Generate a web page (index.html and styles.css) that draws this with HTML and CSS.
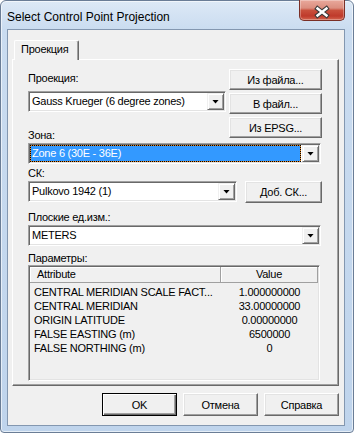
FILE: index.html
```html
<!DOCTYPE html>
<html lang="ru">
<head>
  <meta charset="UTF-8"/>
  <title>Select Control Point Projection</title>
  <link rel="stylesheet" href="styles.css">
</head>
<body>
  <div class="window">
    <div class="titlebar">
      <span class="title">Select Control Point Projection</span>
      <div class="close">
        <svg width="44" height="20" viewBox="0 0 44 20">
          <path d="M17.5 8.5 L26.5 15.5 M26.5 8.5 L17.5 15.5" stroke="#3a3a3a" stroke-width="4.6" stroke-linecap="square"/>
          <path d="M17.5 8.5 L26.5 15.5 M26.5 8.5 L17.5 15.5" stroke="#fff" stroke-width="2.4" stroke-linecap="square"/>
        </svg>
      </div>
    </div>

    <div class="client">
      <div class="tabs">
        <div class="tab">Проекция</div>
      </div>
      <div class="panel">
        <div class="top">
          <div class="left-col">
            <div class="label">Проекция:</div>
            <div class="combo combo-proj">
              <span class="value">Gauss Krueger (6 degree zones)</span>
              <span class="drop"></span>
            </div>
            <div class="label label-zone">Зона:</div>
          </div>
          <div class="right-col">
            <button class="btn">Из файла...</button>
            <button class="btn">В файл...</button>
            <button class="btn">Из EPSG...</button>
          </div>
        </div>

        <div class="combo combo-wide combo-zone">
          <span class="value">Zone 6 (30E - 36E)</span>
          <span class="drop"></span>
        </div>

        <div class="label label-cs">СК:</div>
        <div class="cs-row">
          <div class="combo combo-cs">
            <span class="value">Pulkovo 1942 (1)</span>
            <span class="drop"></span>
          </div>
          <button class="btn btn-add">Доб. СК...</button>
        </div>

        <div class="label label-units">Плоские ед.изм.:</div>
        <div class="combo combo-wide combo-units">
          <span class="value">METERS</span>
          <span class="drop"></span>
        </div>

        <div class="label label-params">Параметры:</div>
        <div class="list">
          <div class="list-head">
            <div class="head-attr">Attribute</div>
            <div class="head-val">Value</div>
          </div>
          <div class="list-body">
            <div class="list-row"><span class="row-attr">CENTRAL MERIDIAN SCALE FACT...</span><span class="row-val">1.000000000</span></div>
            <div class="list-row"><span class="row-attr">CENTRAL MERIDIAN</span><span class="row-val">33.00000000</span></div>
            <div class="list-row"><span class="row-attr">ORIGIN LATITUDE</span><span class="row-val">0.00000000</span></div>
            <div class="list-row"><span class="row-attr">FALSE EASTING (m)</span><span class="row-val">6500000</span></div>
            <div class="list-row"><span class="row-attr">FALSE NORTHING (m)</span><span class="row-val">0</span></div>
          </div>
        </div>
      </div>

      <div class="actions">
        <button class="btn btn-default">OK</button>
        <button class="btn">Отмена</button>
        <button class="btn">Справка</button>
      </div>
    </div>
  </div>
</body>
</html>
```

FILE: styles.css
```css
body {
  margin: 0;
  font-family: "Liberation Sans", Arial, sans-serif;
  font-size: 11px;
  letter-spacing: -0.25px;
  color: #000;
}

/* window frame */
.window {
  width: 354px;
  height: 433px;
  box-sizing: border-box;
  border: 1px solid #6a7d96;
  border-radius: 6px 6px 4px 4px;
  background: linear-gradient(180deg, #dde9f6 0, #cadcf0 28px, #bfd4ec 100%);
  box-shadow: inset 0 0 0 1px rgba(255,255,255,0.6);
  padding: 0 8px 6px 6px;
  display: flex;
  flex-direction: column;
}
.titlebar {
  height: 28px;
  display: flex;
  justify-content: space-between;
  align-items: flex-start;
}
.title {
  font-size: 12px;
  letter-spacing: 0;
  line-height: 12px;
  padding-top: 10px;
}
.close {
  width: 46px;
  height: 21px;
  margin-top: -1px;
  box-sizing: border-box;
  border: 1px solid #7a2f26;
  border-top: none;
  border-radius: 0 0 5px 5px;
  background: linear-gradient(180deg, #e9a99c 0, #db8e7f 40%, #c9503c 52%, #bf3a2b 80%, #d4654f 100%);
  box-shadow: inset 0 0 0 1px rgba(255,255,255,0.3);
}
.close svg { display: block; }

.client {
  flex: 1;
  background: #f0f0f0;
  border: 1px solid #8397b0;
  padding: 10px 5px 0 4px;
}

/* tab */
.tabs {
  display: flex;
  height: 19px;
  padding-left: 2px;
  position: relative;
  z-index: 1;
}
.tab {
  width: 65px;
  height: 20px;
  box-sizing: border-box;
  background: #f0f0f0;
  border-left: 1px solid #fff;
  border-top: 1px solid #fff;
  border-right: 1px solid #696969;
  box-shadow: inset -1px 0 #a0a0a0;
  border-radius: 2px 2px 0 0;
  padding: 2px 0 0 6px;
  line-height: 13px;
}
.panel {
  height: 327px;
  box-sizing: border-box;
  border: 1px solid;
  border-color: #fff #696969 #696969 #fff;
  box-shadow: inset -1px -1px #a0a0a0;
  padding: 9px 16px 0 15px;
}

.top {
  display: flex;
  justify-content: space-between;
}
.left-col {
  width: 198px;
  padding-top: 3px;
}
.right-col {
  width: 93px;
  display: flex;
  flex-direction: column;
  gap: 3px;
}
.label {
  height: 13px;
  line-height: 13px;
  white-space: nowrap;
}
.combo-proj { margin-top: 6px; }
.label-zone { margin-top: 17px; }
.combo-zone { margin-top: 1px; }
.label-cs { margin-top: 3px; }
.label-units { margin-top: 8px; }
.combo-units { margin-top: 1px; }
.label-params { margin-top: 6px; }

.cs-row {
  display: flex;
  justify-content: space-between;
  margin-top: 1px;
}

/* classic controls */
.btn {
  box-sizing: border-box;
  height: 21px;
  padding: 0;
  font: inherit;
  letter-spacing: inherit;
  color: #000;
  background: #f0f0f0;
  border: 1px solid;
  border-color: #fff #696969 #696969 #fff;
  box-shadow: inset -1px -1px #a0a0a0, inset 1px 1px #e3e3e3;
}
.btn-add {
  width: 77px;
  height: 22px;
}

.combo {
  display: flex;
  height: 21px;
  box-sizing: border-box;
  background: #fff;
  border: 1px solid;
  border-color: #a0a0a0 #fff #fff #a0a0a0;
  box-shadow: inset 1px 1px #696969, inset -1px -1px #e3e3e3;
  padding: 1px;
}
.combo .value {
  flex: 1;
  line-height: 17px;
  padding-left: 2px;
  white-space: nowrap;
  overflow: hidden;
}
.combo-wide { width: 293px; }
.combo-cs { width: 209px; }
.combo-zone .value {
  color: #fff;
  background: linear-gradient(#3399ff, #3399ff) padding-box, #e0892c;
  border: 1px dotted #000;
  padding-left: 1px;
  line-height: 15px;
  margin-right: 1px;
}
.drop {
  width: 17px;
  height: 17px;
  box-sizing: border-box;
  background: #f0f0f0;
  border: 1px solid;
  border-color: #f0f0f0 #696969 #696969 #f0f0f0;
  box-shadow: inset 1px 1px #fff, inset -1px -1px #a0a0a0;
  display: flex;
  align-items: center;
  justify-content: center;
}
.drop::after {
  content: "";
  width: 7px;
  height: 4px;
  background: #000;
  clip-path: polygon(0 0, 100% 0, 50% 100%);
}

/* parameters list */
.list {
  width: 292px;
  height: 116px;
  box-sizing: border-box;
  border: 1px solid;
  border-color: #a0a0a0 #fff #fff #a0a0a0;
  box-shadow: inset 1px 1px #696969, inset -1px -1px #e3e3e3;
  padding: 1px;
}
.list-head, .list-row {
  display: grid;
  grid-template-columns: 191px 1fr;
}
.list-head div {
  height: 16px;
  line-height: 15px;
  box-sizing: border-box;
  border-right: 1px solid #a0a0a0;
  border-bottom: 1px solid #a0a0a0;
  box-shadow: inset 1px 1px #fff;
}
.head-attr { padding-left: 7px; }
.head-val { text-align: center; }
.list-body { padding-top: 2px; }
.list-row {
  height: 14px;
  line-height: 14px;
  white-space: nowrap;
}
.row-attr { padding-left: 4px; }
.row-val { text-align: center; }

/* dialog buttons */
.actions {
  display: flex;
  justify-content: flex-end;
  gap: 6px;
  margin-top: 7px;
}
.actions .btn {
  width: 75px;
  height: 23px;
}
.btn-default {
  border: 1px solid #000;
  box-shadow: inset 1px 1px #fff, inset -1px -1px #696969, inset -2px -2px #a0a0a0;
}
```
